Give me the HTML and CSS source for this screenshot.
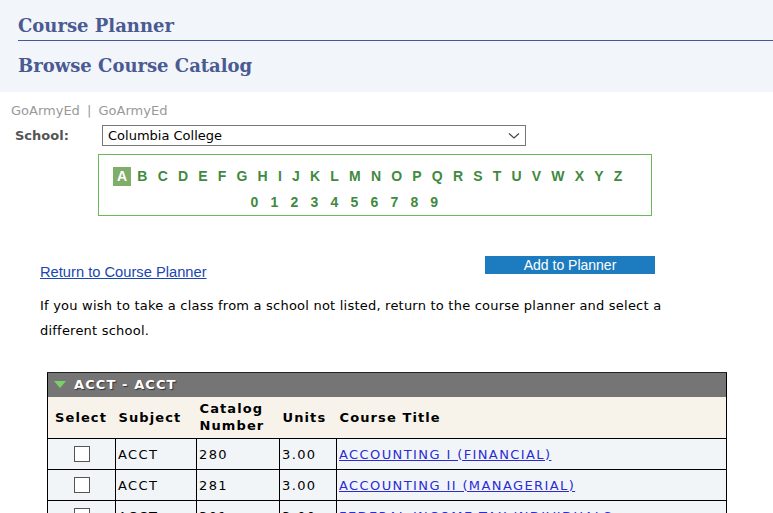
FILE: index.html
```html
<!DOCTYPE html>
<html>
  <head>
    <meta charset="utf-8" />
    <title>Browse Course Catalog</title>
    <link rel="stylesheet" href="styles.css">
  </head>
  <body>
    <div id="banner">
      <h2 class="planner">Course Planner</h2>
      <h1 class="catalog">Browse Course Catalog</h1>
    </div>
    <div id="content">
      <div class="crumbs">GoArmyEd <span class="sep">|</span> GoArmyEd</div>
      <div class="school-row">
        <label class="school-label">School:</label>
        <div class="select">
          <span>Columbia College</span>
          <svg width="12" height="8" viewBox="0 0 12 8"><path d="M1 1.5 L6 6 L11 1.5" fill="none" stroke="#444" stroke-width="1.2"/></svg>
        </div>
      </div>
      <div class="alpha">
        <div class="letters">
          <span class="on">A</span><span>B</span><span>C</span><span>D</span><span>E</span><span>F</span><span>G</span><span>H</span><span>I</span><span>J</span><span>K</span><span>L</span><span>M</span><span>N</span><span>O</span><span>P</span><span>Q</span><span>R</span><span>S</span><span>T</span><span>U</span><span>V</span><span>W</span><span>X</span><span>Y</span><span>Z</span>
        </div>
        <div class="letters digits">
          <span>0</span><span>1</span><span>2</span><span>3</span><span>4</span><span>5</span><span>6</span><span>7</span><span>8</span><span>9</span>
        </div>
      </div>
      <div class="actions">
        <a href="#" class="back">Return to Course Planner</a>
        <button class="add">Add to Planner</button>
      </div>
      <p class="note">If you wish to take a class from a school not listed, return to the course planner and select a different school.</p>
      <table class="grid">
        <tr class="group">
          <th colspan="5"><span class="tri"></span>ACCT - ACCT</th>
        </tr>
        <tr class="heads">
          <th class="c-sel">Select</th>
          <th class="c-sub">Subject</th>
          <th class="c-cat">Catalog<br>Number</th>
          <th class="c-unit">Units</th>
          <th class="c-title">Course Title</th>
        </tr>
        <tr>
          <td class="c-sel"><span class="box"></span></td>
          <td>ACCT</td>
          <td>280</td>
          <td>3.00</td>
          <td><a href="#">ACCOUNTING I (FINANCIAL)</a></td>
        </tr>
        <tr>
          <td class="c-sel"><span class="box"></span></td>
          <td>ACCT</td>
          <td>281</td>
          <td>3.00</td>
          <td><a href="#">ACCOUNTING II (MANAGERIAL)</a></td>
        </tr>
        <tr>
          <td class="c-sel"><span class="box"></span></td>
          <td>ACCT</td>
          <td>301</td>
          <td>3.00</td>
          <td><a href="#">FEDERAL INCOME TAX-INDIVIDUALS</a></td>
        </tr>
      </table>
    </div>
  </body>
</html>
```

FILE: styles.css
```css
* {
  box-sizing: border-box;
}
body {
  margin: 0;
  font-family: "DejaVu Sans", Verdana, sans-serif;
  font-size: 13px;
  background: #fff;
}
#banner {
  background: #f2f5f9;
  padding: 14px 0 14px 18px;
  height: 92px;
}
#banner h1,
#banner h2 {
  margin: 0;
  font-family: "DejaVu Serif", Georgia, serif;
  font-weight: bold;
  color: #4a5a92;
}
.planner {
  font-size: 18px;
  line-height: 24px;
  border-bottom: 1px solid #435a98;
  padding-bottom: 2px;
}
.catalog {
  font-size: 18px;
  line-height: 24px;
  margin-top: 13px !important;
}
.crumbs {
  color: #999;
  margin: 11px 0 0 11px;
  line-height: 16px;
}
.sep {
  margin: 0 3px;
}
.school-row {
  display: flex;
  align-items: center;
  margin: 6px 0 0 15px;
  height: 21px;
}
.school-label {
  width: 87px;
  font-weight: bold;
  color: #555;
}
.select {
  width: 424px;
  height: 21px;
  border: 1px solid #767676;
  display: flex;
  align-items: center;
  justify-content: space-between;
  padding: 0 5px 0 5px;
  color: #000;
}
.alpha {
  width: 554px;
  height: 62px;
  margin: 8px 0 0 98px;
  border: 1px solid #6ab85a;
  padding: 12px 0 0 14px;
  font-family: "Liberation Sans", Arial, sans-serif;
  font-weight: bold;
  font-size: 14px;
  color: #3f8a3f;
}
.letters {
  display: flex;
}
.letters span {
  display: inline-block;
  height: 19px;
  line-height: 19px;
  padding: 0 4px;
  margin-right: 2.2px;
}
.letters .on {
  background: #7fae6b;
  color: #fff;
}
.digits {
  margin: 7px 0 0 134px;
}
.digits span {
  padding: 0 3.5px;
  margin-right: 5.2px;
}
.actions {
  display: flex;
  justify-content: space-between;
  align-items: flex-start;
  width: 615px;
  margin: 40px 0 0 40px;
}
.back {
  margin-top: 8px;
  font-family: "Liberation Sans", Arial, sans-serif;
  font-size: 14.7px;
  color: #1a46b0;
}
.add {
  width: 170px;
  height: 18px;
  border: none;
  background: #1d7bc0;
  color: #fff;
  font-family: "Liberation Sans", Arial, sans-serif;
  font-size: 14px;
  padding: 0;
  line-height: 16px;
}
.note {
  margin: 13px 0 0 40px;
  width: 640px;
  line-height: 25px;
  letter-spacing: 0.22px;
}
.grid {
  margin: 29px 0 0 47px;
  width: 680px;
  border-collapse: collapse;
  border-left: 1px solid #000;
  border-right: 1px solid #000;
}
.group th {
  background: #757575;
  color: #fff;
  text-align: left;
  height: 24px;
  padding: 0 0 0 6px;
  border-top: 1px solid #222;
  letter-spacing: 1.1px;
  text-shadow: 1px 1px 1px #333;
  font-size: 13px;
}
.tri {
  display: inline-block;
  width: 0;
  height: 0;
  border-left: 6px solid transparent;
  border-right: 6px solid transparent;
  border-top: 7px solid #7bd06a;
  margin: 0 8px 2px 0;
  vertical-align: middle;
}
.heads th {
  background: #f7f3eb;
  height: 42px;
  text-align: left;
  padding: 0 3px;
  letter-spacing: 1.1px;
  line-height: 17px;
}
.heads .c-sel {
  padding-left: 7px;
}
td {
  background: #f1f5f8;
  height: 31px;
  border: 1px solid #000;
  padding: 0 2px;
  letter-spacing: 1.4px;
}
td.c-sel {
  text-align: center;
  border-left: none;
}
td:last-child {
  border-right: none;
}
.c-sel { width: 68px; }
.c-sub { width: 81px; }
.c-cat { width: 83px; }
.c-unit { width: 57px; }
.box {
  display: inline-block;
  width: 16px;
  height: 16px;
  border: 1px solid #555;
  background: #fff;
  vertical-align: middle;
}
td a {
  color: #2b2bd6;
}
```
